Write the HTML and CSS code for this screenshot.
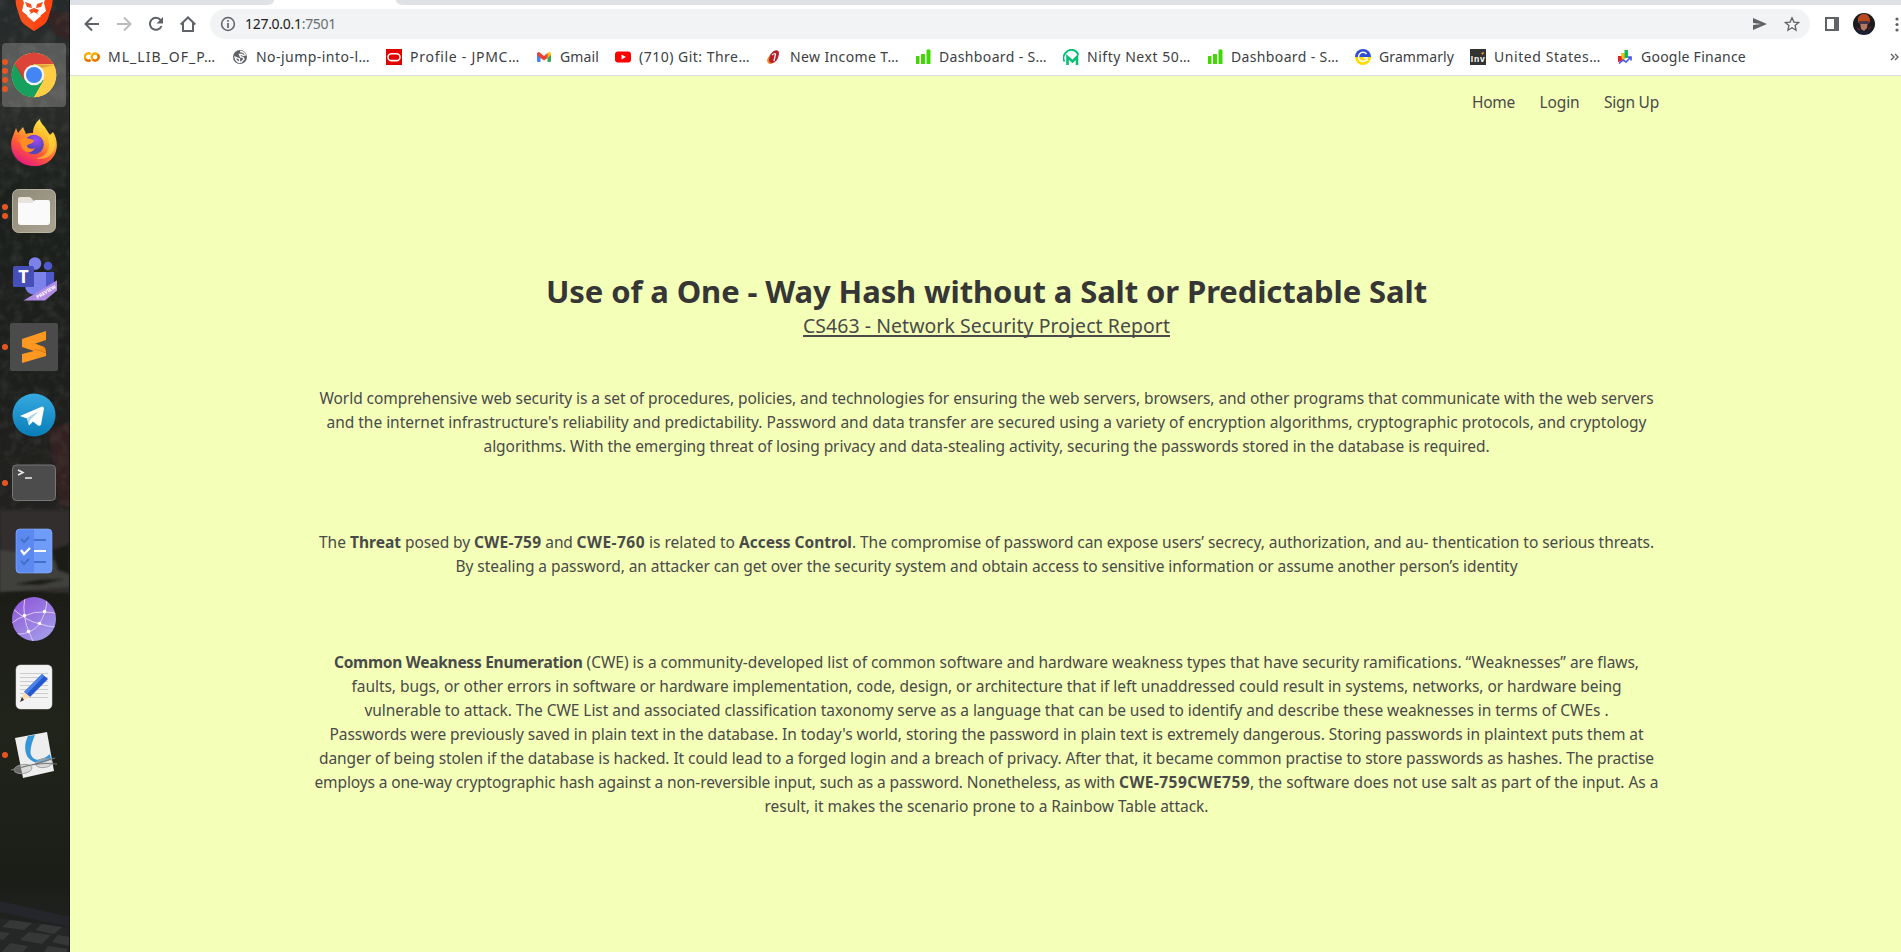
FILE: index.html
```html
<!DOCTYPE html>
<html lang="en">
<head>
<meta charset="utf-8">
<title>127.0.0.1:7501</title>
<link rel="stylesheet" href="styles.css">
</head>
<body>
<div class="desktop">
  <aside class="dock">
    <svg class="wallpaper" width="70" height="952" viewBox="0 0 70 952" preserveAspectRatio="none">
      <defs>
        <linearGradient id="wall" x1="0" y1="0" x2="0" y2="1">
          <stop offset="0" stop-color="#252a2b"/><stop offset=".1" stop-color="#2c2d2a"/><stop offset=".2" stop-color="#1c201d"/><stop offset=".4" stop-color="#1d1f1c"/><stop offset=".52" stop-color="#22211f"/><stop offset=".63" stop-color="#1d1d19"/><stop offset=".76" stop-color="#20241a"/><stop offset=".93" stop-color="#1b1e18"/><stop offset="1" stop-color="#222424"/>
        </linearGradient>
        <filter id="leaf" x="0" y="0" width="1" height="1"><feTurbulence type="fractalNoise" baseFrequency=".09" numOctaves="3" seed="4"/><feColorMatrix values="0 0 0 0 .35  0 0 0 0 .38  0 0 0 0 .34  .9 0 0 0 -.38"/></filter>
        <filter id="soft"><feGaussianBlur stdDeviation="1.2"/></filter>
      </defs>
      <rect width="70" height="952" fill="url(#wall)"/>
      <path d="M46 12h24v28l-16-6zM48 430l22-8v84H60z" fill="#3a2422" opacity=".7" filter="url(#soft)"/>
      <path d="M0 510h70v84l-70-4z" fill="#302f2d" filter="url(#soft)"/>
      <path d="M0 550l30 3 40 12v22l-70 5z" fill="#41413e" filter="url(#soft)"/>
      <path d="M16 584l22-4 26-1-25 6zM52 550l18-6v30l-12-4zM0 598l30-6 40 2v10H0z" fill="#1c1e19" filter="url(#soft)"/>
      <rect width="70" height="510" filter="url(#leaf)" opacity=".32"/>
      <path d="M0 901l70 16v10L0 912z" fill="#24262c"/>
      <path d="M0 918l70 10v24H0z" fill="#252727"/>
      <path d="M10 920l22 3-8 7-22-3zM42 924l20 3-8 7-19-4zM0 932l10 1-7 7-3-1zM29 932l22 3-9 9-22-4zM58 935l12 2v9l-18-4zM10 943l18 3-5 6H2zM48 946l20 3-2 3H44z" fill="#363838"/>
      <path d="M69 0h1v952h-1z" fill="#171917"/>
    </svg>

    <div class="app">
      <svg width="44" height="64" viewBox="0 0 44 64"><path d="M2 8h40l-2 22-4 13q-1 4-5 7l-9 6-9-6q-4-3-5-7L4 30z" fill="#f4511e"/><path d="M22 8h20l-2 22-4 13q-1 4-5 7l-9 6z" fill="#ff4410"/><path d="M9 18h26l-3 10 2 8-6 5-3-3 2-3-5-2-5 2 2 3-3 3-6-5 2-8z" fill="#fff"/><path d="M13 27l6 2 1 4-5-1zM31 27l-6 2-1 4 5-1z" fill="#f4511e"/><path d="M15 41l7-4 7 4-7 6z" fill="#fff"/></svg>
    </div>
    <div class="app active">
      <div class="dots"><i></i><i></i><i></i><i></i></div>
      <svg width="46" height="46" viewBox="0 0 46 46"><circle cx="23" cy="23" r="22.3" fill="#ffce44"/><path d="M23 23L3.7 11.9A22.3 22.3 0 0 0 23 45.3l9.7-16.7z" fill="#16a05d"/><path d="M3.7 12a22.3 22.3 0 0 1 38.6 0H23L13 28z" fill="#db4437"/><path d="M23 12h19.3q3 5 3 11A22.3 22.3 0 0 1 23 45.3L32.6 28.6 33 23z" fill="#ffce44"/><path d="M23 12l20 1-12 3zM13 28L3.7 12l9 10z" fill="#903326" opacity=".28"/><circle cx="23" cy="23" r="10.3" fill="#f4f4f4"/><circle cx="23" cy="23" r="8" fill="#4285f4"/></svg>
    </div>
    <div class="app">
      <svg width="46" height="48" viewBox="0 0 46 48"><defs><linearGradient id="ff" x1=".8" y1="0" x2=".25" y2="1"><stop offset="0" stop-color="#fff44f"/><stop offset=".35" stop-color="#ffb52b"/><stop offset=".65" stop-color="#ff5a36"/><stop offset="1" stop-color="#e31587"/></linearGradient><radialGradient id="fg" cx=".6" cy=".25"><stop offset="0" stop-color="#a24cf8"/><stop offset="1" stop-color="#5944b8"/></radialGradient></defs><path d="M29 0c0 4 4 6 6 10l4 6 3-3c9 14 2 34-19 34C5 47-4 30 2 17L5 9l2 5 5-6 3 7c2-1 4-1 7-1 0-6 3-11 7-14z" fill="url(#ff)"/><path d="M31 9c4 5 7 10 7 17 0 8-6 13-13 13 8 3 18-2 19-13 0-6-3-10-5-11l-2 3z" fill="#ffdc3e" opacity=".6"/><circle cx="23" cy="25.500" r="9.800" fill="url(#fg)"/><path d="M7 21c5-3 9-2 12-1l4 1c0 4-7 4-7 6s4 4 8 2c-3 6-11 5-13 0-1-4-2-6-4-8z" fill="#ff8c25"/></svg>
    </div>
    <div class="app">
      <div class="dots"><i></i><i></i></div>
      <svg width="46" height="46" viewBox="0 0 46 46"><defs><linearGradient id="fi" x1="0" y1="0" x2="1" y2="1"><stop offset="0" stop-color="#8f8979"/><stop offset="1" stop-color="#aaa390"/></linearGradient></defs><rect x="1.500" y="1.500" width="43" height="43" rx="6" fill="url(#fi)" stroke="#b9b29f"/><path d="M7 11q0-2 2-2h9q2 0 3 2l2 2h15v10H7z" fill="#e8e4dc"/><path d="M7 15h14l3-3h13q2 0 2 2v20q0 3-3 3H10q-3 0-3-3z" fill="#fafafa"/></svg>
    </div>
    <div class="app teams">
      <svg width="46" height="46" viewBox="0 0 46 46"><circle cx="24" cy="7.500" r="6.300" fill="#7b83eb"/><circle cx="37" cy="10" r="4.300" fill="#5059c9"/><path d="M29 16h14v14q-2 8-9 8h-5z" fill="#5059c9"/><path d="M14 16h21v14q-1 9-11 9-10-1-10-10z" fill="#7b83eb"/><rect x="2" y="10" width="21" height="21" rx="1.500" fill="#464eb8"/><path d="M46.500 24v10L34 44.500H12.500z" fill="#b08ae3"/><text x="12.500" y="27" class="teams-letter">T</text><text class="preview-label" transform="translate(26.500 43) rotate(-31)">PREVIEW</text></svg>
    </div>
    <div class="app">
      <div class="dots"><i></i></div>
      <svg width="48" height="48" viewBox="0 0 48 48"><rect width="48" height="48" rx="2" fill="#4b4b4b"/><path d="M12 22l24 8v3l-24 7v-9l12-3-12-4z" fill="#ff9820"/><path d="M12 22l24 8q0-5-2-6l-10-4z" fill="#f58a12"/><path d="M12 16l24-8v9l-12 4 10 3q-6 5-22-1z" fill="#ff9820"/></svg>
    </div>
    <div class="app">
      <svg width="44" height="44" viewBox="0 0 44 44"><defs><linearGradient id="tg" x1="0" y1="0" x2="0" y2="1"><stop offset="0" stop-color="#36a9e0"/><stop offset="1" stop-color="#087db8"/></linearGradient></defs><circle cx="22" cy="22" r="21.500" fill="url(#tg)"/><path d="M8 23L30 13.500q2 0 2 2l-3 16q-1 2-3 1l-5-4-4 4-2-7z" fill="#fff"/><path d="M15 25l12-7-9 9-1 5z" fill="#abd6e9"/></svg>
    </div>
    <div class="app">
      <div class="dots"><i></i></div>
      <svg width="46" height="38" viewBox="0 0 46 38"><rect x="1.500" y="1" width="43" height="35.500" rx="4" fill="#4c4c4c" stroke="#777"/><path d="M7 6l5 2.500L7 11M14 14h7" fill="none" stroke="#eee" stroke-width="1.500"/></svg>
    </div>
    <div class="app">
      <svg width="38" height="46" viewBox="0 0 38 46"><rect x="1" y="1" width="36" height="44" rx="4" fill="#6f9cf8"/><path d="M19 1H5Q1 1 1 5v36q0 4 4 4h14z" fill="#5c89ef"/><rect x="1" y="1" width="36" height="44" rx="4" fill="none" stroke="#8db0ff" opacity=".6"/><path d="M6 11l3 3 5-5M6 33l3 3 5-5M19 12h12M19 34h12" fill="none" stroke="#466fc9" stroke-width="2"/><path d="M6 22l3 4 6-6M19 23h12" fill="none" stroke="#fff" stroke-width="2.200"/></svg>
    </div>
    <div class="app">
      <svg width="46" height="46" viewBox="0 0 46 46"><defs><linearGradient id="gl" x1="0" y1="0" x2=".7" y2="1"><stop offset="0" stop-color="#8d51d8"/><stop offset="1" stop-color="#a39be8"/></linearGradient><clipPath id="glc"><circle cx="23" cy="23" r="22"/></clipPath></defs><circle cx="23" cy="23" r="22" fill="url(#gl)"/><g clip-path="url(#glc)" fill="none" stroke="#dcc9f5"><path d="M14 1q-2 10-.5 19Q15 30 18 36t4 10M1 12q14 13 28 16 9 3 17 3M1 27q6-5 12.500-7Q23 15 34 16q8 0 12 2M36 1q0 9-2 15-3 8-5.500 12Q24 34 18 36 9 40 1 36"/></g><g fill="#fff"><circle cx="13.500" cy="19.500" r="1.800"/><circle cx="33.500" cy="15.500" r="1.800"/><circle cx="28.500" cy="27.500" r="1.800"/><circle cx="17.500" cy="35.500" r="1.800"/></g></svg>
    </div>
    <div class="app">
      <svg width="38" height="46" viewBox="0 0 38 46"><rect x="1" y="1" width="36" height="44" rx="4.500" fill="#f3f3f3" stroke="#ddd" stroke-width=".5"/><path d="M5 9.500h28M5 13.500h28M5 17.500h28M5 21.500h28M5 25.500h28M5 29.500h28M5 33.500h28" stroke="#ccc"/><path d="M27 10l6 5-18 18-6-5z" fill="#2559cf"/><path d="M27 10l2 2-17 18-3-2z" fill="#4f82e8"/><path d="M9 28l6 5-9 4z" fill="#ffdcae"/><path d="M7 33l2 3-4 2z" fill="#333"/></svg>
    </div>
    <div class="app">
      <div class="dots"><i></i></div>
      <svg width="48" height="48" viewBox="0 0 48 48"><path d="M5 7l32-6 7 39-31 7z" fill="#eee"/><path d="M18 5l7-1q-6 14-4 20c3 7 11 6 19-1l1 5c-9 7-20 4-24-3-3-7-2-14 1-20z" fill="#3496d8"/><g fill="#c4c4c4" fill-opacity=".45" stroke="#999" stroke-width=".9"><ellipse cx="13" cy="38" rx="9" ry="4.500" transform="rotate(-8 13 38)"/><ellipse cx="34" cy="32" rx="8.500" ry="4.500" transform="rotate(-8 34 32)"/></g><path d="M1 39l24-6 20-6M12 36q18-5 35-3" fill="none" stroke="#777" stroke-width="1.100"/></svg>
    </div>
  </aside>

  <main class="browser">
    <div class="tabstrip"><div class="tab-left"></div><div class="tab-gap"></div><div class="tab-right"></div></div>
    <div class="toolbar">
      <svg class="tool" width="16" height="16" viewBox="0 0 16 16"><path d="M15 8H2M8 1.500L1.500 8 8 14.500" fill="none" stroke="#5f6368" stroke-width="2"/></svg>
      <svg class="tool" width="16" height="16" viewBox="0 0 16 16"><path d="M1 8h13M8 1.500L14.500 8 8 14.500" fill="none" stroke="#babcbe" stroke-width="2"/></svg>
      <svg class="tool" width="16" height="16" viewBox="0 0 16 16"><path d="M13.500 10A6 6 0 1 1 12.600 4" fill="none" stroke="#5f6368" stroke-width="2"/><path d="M15 1v6.500H8.500z" fill="#5f6368"/></svg>
      <svg class="tool" width="16" height="16" viewBox="0 0 16 16"><path d="M.7 8.500L8 1.500l7.300 7M3 7v8h10V7" fill="none" stroke="#5f6368" stroke-width="2"/></svg>
      <div class="omnibox">
        <svg width="16" height="16" viewBox="0 0 16 16"><circle cx="8" cy="8" r="6.400" fill="none" stroke="#5f6368" stroke-width="1.500"/><path d="M8 7v5M8 4v1.700" stroke="#5f6368" stroke-width="1.700"/></svg>
        <span class="url" data-w="91"><span class="host">127.0.0.1</span>:7501</span>
        <svg class="send" width="16" height="16" viewBox="0 0 16 16"><path d="M1 2l14 6-14 6V9l8-1-8-1z" fill="#5f6368"/></svg>
        <svg class="star" width="16" height="16" viewBox="0 0 16 16"><path d="M8 1.800l1.900 4.300 4.700.4-3.500 3.100 1 4.600L8 11.800l-4.100 2.400 1-4.600-3.500-3.100 4.700-.4z" fill="none" stroke="#5f6368" stroke-width="1.300"/></svg>
      </div>
      <svg class="panel" width="14" height="14" viewBox="0 0 14 14"><path d="M0 0h14v14H0zM2 2v10h7V2z" fill="#5f6368" fill-rule="evenodd"/></svg>
      <svg class="avatar" width="22" height="22" viewBox="0 0 22 22"><circle cx="11" cy="11" r="11" fill="#1e1b20"/><path d="M5 9q-1-7 5-8 7-1 7 8l-4 3H8z" fill="#b94a1c"/><path d="M7 9h8l-1 6-3 3-3-2z" fill="#b27864"/><path d="M6 8h10v3H6z" fill="#4a3549"/><path d="M3 16l5 1 3 2 4-2 4-2-3 6H6z" fill="#1b2136"/><path d="M4 15l3 2M18 14l-3 2" stroke="#92223a"/></svg>
      <svg class="more" width="6" height="16" viewBox="0 0 6 16" fill="#5f6368"><circle cx="3" cy="3" r="1.600"/><circle cx="3" cy="8.500" r="1.600"/><circle cx="3" cy="14" r="1.600"/></svg>
    </div>
    <div class="bookmarks">
      <div class="bm"><svg width="16" height="16" viewBox="0 0 16 16" fill="none" stroke-width="2.300"><path d="M6.700 5.200a3.600 3.600 0 1 0 0 5.600" stroke="#f9ab00"/><circle cx="11.200" cy="8" r="3.500" stroke="#f9ab00"/><path d="M8.700 10.500a3.500 3.500 0 0 0 5-5M1.500 10.300a3.600 3.600 0 0 0 5 .7" stroke="#e8710a"/></svg><span data-w="108">ML_LIB_OF_P…</span></div>
      <div class="bm"><svg width="16" height="16" viewBox="0 0 16 16"><circle cx="8" cy="8" r="7" fill="#5f6368"/><path d="M8 2.500q4 0 5.500 3.500-3 1-3.500-.5H7.500L8.500 8q3-.5 3.500 2l-3 3.500-1.500-1V10L3 8q1 5 5 5.500" fill="none" stroke="#fff" stroke-width="1.300"/></svg><span data-w="114">No-jump-into-l…</span></div>
      <div class="bm"><svg width="16" height="16" viewBox="0 0 16 16"><path d="M0 0h16v16H0z" fill="#e50000"/><rect x="2" y="4.800" width="12" height="6.800" rx="3.400" fill="none" stroke="#fff" stroke-width="1.600"/></svg><span data-w="110">Profile - JPMC…</span></div>
      <div class="bm"><svg width="16" height="16" viewBox="0 0 16 16"><path d="M1 4h3.500v9H2q-1 0-1-1z" fill="#4285f4"/><path d="M11.500 5H15v7q0 1-1 1h-2.500z" fill="#34a853"/><path d="M11.500 4.500L13 3q2 0 2 2v1l-3.500 3z" fill="#fbbc04"/><path d="M1 5q0-2 2-2l5 4 3.500-3v5L8 11.500 4.500 9 1 6z" fill="#ea4335"/></svg><span data-w="39">Gmail</span></div>
      <div class="bm"><svg width="16" height="16" viewBox="0 0 16 16"><rect y="2.500" width="16" height="11" rx="3" fill="#f00"/><path d="M6.500 5.500L11 8l-4.500 2.500z" fill="#fff"/></svg><span data-w="111">(710) Git: Thre…</span></div>
      <div class="bm"><svg width="16" height="16" viewBox="0 0 16 16"><path d="M7 2.500q5-3 6 1 0 6-4 9.500-6 3-7 0 0-6 5-10.500z" fill="#b71e2b"/><path d="M5 5q-4 4-4 7 1 4 6 2-4 0-4-3 0-3 2-6z" fill="#f08a24"/><path d="M9.500 5L8 12M6 6q4-3 3.500 0" fill="none" stroke="#fff" stroke-width="1.200"/></svg><span data-w="109">New Income T…</span></div>
      <div class="bm"><svg width="16" height="16" viewBox="0 0 16 16" fill="#40d800"><rect x="1" y="7" width="3.500" height="8" rx=".6"/><rect x="6" y="5" width="4" height="10" rx=".6"/><rect x="11.500" y=".5" width="4" height="14.500" rx=".6"/></svg><span data-w="108">Dashboard - S…</span></div>
      <div class="bm"><svg width="16" height="16" viewBox="0 0 16 16" fill="none" stroke="#08be75"><path d="M1.500 12.500A7 7 0 0 1 3 3.500 7 7 0 0 1 15.200 6" stroke-width="1.900"/><path d="M4.500 16V8l5 4.500L14 8v8" stroke-width="2.600"/></svg><span data-w="104">Nifty Next 50…</span></div>
      <div class="bm"><svg width="16" height="16" viewBox="0 0 16 16" fill="#40d800"><rect x="1" y="7" width="3.500" height="8" rx=".6"/><rect x="6" y="5" width="4" height="10" rx=".6"/><rect x="11.500" y=".5" width="4" height="14.500" rx=".6"/></svg><span data-w="108">Dashboard - S…</span></div>
      <div class="bm"><svg width="16" height="16" viewBox="0 0 16 16"><path d="M0 8a8 8 0 0 1 16 0z" fill="#2f4fd3"/><path d="M0 8a8 8 0 0 0 16 0z" fill="#ffdb05"/><path d="M11.500 5A4.500 4.500 0 1 0 12 10M8.500 9H12v3" fill="none" stroke="#fff" stroke-width="1.500"/></svg><span data-w="75">Grammarly</span></div>
      <div class="bm"><svg width="16" height="16" viewBox="0 0 16 16"><path d="M0 0h16v16H0z" fill="#333"/><text x=".8" y="12.500" class="inv" textLength="14">Inv</text><path d="M11 4l3-1-1 3z" fill="#ff9f10"/></svg><span data-w="107">United States…</span></div>
      <div class="bm"><svg width="16" height="16" viewBox="0 0 16 16"><path d="M1 7h4v5l-4 1z" fill="#ea1d2d"/><path d="M4 4h4v6l-3 2z" fill="#fbbc04"/><path d="M7.500 1h3.500v8H7.500z" fill="#16b85a"/><path d="M2 14.500L6 11l3 2 4.500-4.500M14 11.500V8h-3" fill="none" stroke="#4257ef" stroke-width="1.600"/></svg><span data-w="105">Google Finance</span></div>
      <svg class="overflow" width="10" height="10" viewBox="0 0 10 10"><path d="M1 2l3 3-3 3M5 2l3 3-3 3" fill="none" stroke="#5f6368" stroke-width="1.400"/></svg>
    </div>
    <div class="page">
      <nav class="nav"><a data-w="43">Home</a><a data-w="40">Login</a><a data-w="55">Sign Up</a></nav>
      <section class="hero">
        <h1><span data-w="881">Use of a One - Way Hash without a Salt or Predictable Salt</span></h1>
        <p class="subtitle"><span data-w="367">CS463 - Network Security Project Report</span></p>
        <p class="para">
          <span data-w="1334">World comprehensive web security is a set of procedures, policies, and technologies for ensuring the web servers, browsers, and other programs that communicate with the web servers</span><br>
          <span data-w="1320">and the internet infrastructure's reliability and predictability. Password and data transfer are secured using a variety of encryption algorithms, cryptographic protocols, and cryptology</span><br>
          <span data-w="1006">algorithms. With the emerging threat of losing privacy and data-stealing activity, securing the passwords stored in the database is required.</span>
        </p>
        <p class="para">
          <span data-w="31">The </span><b data-w="51">Threat</b><span data-w="73"> posed by </span><b data-w="67.500">CWE-759</b><span data-w="35"> and </span><b data-w="68.500">CWE-760</b><span data-w="94"> is related to </span><b data-w="113">Access Control</b><span data-w="802">. The compromise of password can expose users’ secrecy, authorization, and au- thentication to serious threats.</span><br>
          <span data-w="1062">By stealing a password, an attacker can get over the security system and obtain access to sensitive information or assume another person’s identity</span>
        </p>
        <p class="para">
          <b data-w="248.500">Common Weakness Enumeration</b><span data-w="1056.500"> (CWE) is a community-developed list of common software and hardware weakness types that have security ramifications. “Weaknesses” are flaws,</span><br>
          <span data-w="1270">faults, bugs, or other errors in software or hardware implementation, code, design, or architecture that if left unaddressed could result in systems, networks, or hardware being</span><br>
          <span data-w="1244">vulnerable to attack. The CWE List and associated classification taxonomy serve as a language that can be used to identify and describe these weaknesses in terms of CWEs .</span><br>
          <span data-w="1314">Passwords were previously saved in plain text in the database. In today's world, storing the password in plain text is extremely dangerous. Storing passwords in plaintext puts them at</span><br>
          <span data-w="1335">danger of being stolen if the database is hacked. It could lead to a forged login and a breach of privacy. After that, it became common practise to store passwords as hashes. The practise</span><br>
          <span data-w="804.500">employs a one-way cryptographic hash against a non-reversible input, such as a password. Nonetheless, as with </span><b data-w="131">CWE-759CWE759</b><span data-w="408.500">, the software does not use salt as part of the input. As a</span><br>
          <span data-w="444">result, it makes the scenario prone to a Rainbow Table attack.</span>
        </p>
      </section>
    </div>
  </main>
</div>
<script src="fit.js"></script>
</body>
</html>
```
FILE: styles.css
```css
* { box-sizing: border-box; }
body { margin: 0; overflow: hidden; font-family: "Noto Sans", "Open Sans", sans-serif; }
svg { display: block; flex: none; }
.desktop { display: flex; width: 1901px; height: 952px; overflow: hidden; }
.dock { position: relative; width: 70px; height: 952px; flex: none; overflow: hidden; background: #1d1f1c; }
.wallpaper { position: absolute; inset: 0; }
.app { position: relative; width: 64px; height: 64px; margin: 0 0 4px 2px; display: flex; align-items: center; justify-content: center; border-radius: 4px; }
.wallpaper + .app { margin-top: -25px; }
.active { background: rgba(255, 255, 255, .22); }
.dots { position: absolute; left: 0; top: 0; height: 64px; display: flex; flex-direction: column; justify-content: center; gap: 3px; }
.dots i { width: 6px; height: 6px; border-radius: 50%; background: #e95420; }
.teams-letter { font: bold 18px "Noto Sans", sans-serif; fill: #fff; text-anchor: middle; }
.preview-label { font: bold 5px "Noto Sans", sans-serif; fill: #fff; }
.inv { font: bold 8.5px "Liberation Sans", sans-serif; fill: #fff; }

.browser { width: 1831px; flex: none; display: flex; flex-direction: column; background: #fff; }
.tabstrip { display: flex; height: 5px; flex: none; }
.tab-left { width: 204px; background: #dee1e6; border-bottom-right-radius: 6px 5px; }
.tab-gap { width: 122px; }
.tab-right { flex: 1; background: #dee1e6; border-bottom-left-radius: 6px 5px; }
.toolbar { display: flex; align-items: center; height: 38px; flex: none; padding-left: 14px; }
.tool { margin-right: 16px; }
.omnibox { display: flex; align-items: center; width: 1600px; height: 30px; margin-left: -2px; padding: 0 10px; border-radius: 15px; background: #f1f3f4; }
.url { margin-left: 9px; font-size: 14px; line-height: 20px; color: #6b6f73; white-space: nowrap; }
.host { color: #202124; }
.send { margin-left: auto; }
.star { margin: 0 0 0 16px; }
.panel { margin-left: 15px; }
.avatar { margin-left: 14px; }
.more { margin-left: 19px; }
.bookmarks { display: flex; align-items: center; gap: 16px; height: 33px; flex: none; padding: 0 1px 5px 14px; border-bottom: 1px solid #d9dbdf; font-size: 14px; line-height: 20px; color: #3c4043; }
.bm { display: flex; align-items: center; gap: 8px; flex: none; white-space: nowrap; }
.overflow { margin-left: auto; }
.page { flex: 1; padding: 12px 240px 0 242px; background: #f4ffb8; color: #4a4a4a; font-size: 15.5px; line-height: 24px; }
.nav { display: flex; justify-content: flex-end; gap: 24.5px; height: 28px; padding: 2px 2px 0 0; white-space: nowrap; }
.hero { padding-top: 157px; text-align: center; white-space: nowrap; }
h1 { margin: 0; font-size: 31px; line-height: 36px; font-weight: 700; color: #363636; }
.subtitle { margin: 2px 0 45px; font-size: 19.4px; line-height: 30px; text-decoration: underline; text-decoration-thickness: 2px; text-underline-offset: 2px; text-decoration-skip-ink: none; }
.hero .para { margin: 0 -20px 72px; }
```
FILE: fit.js
```js
document.querySelectorAll('[data-w]').forEach(function (el) {
  var target = Number(el.dataset.w);
  var spacing = (target - el.getBoundingClientRect().width) / el.textContent.length;
  el.style.letterSpacing = spacing.toFixed(4) + 'px';
});
```
